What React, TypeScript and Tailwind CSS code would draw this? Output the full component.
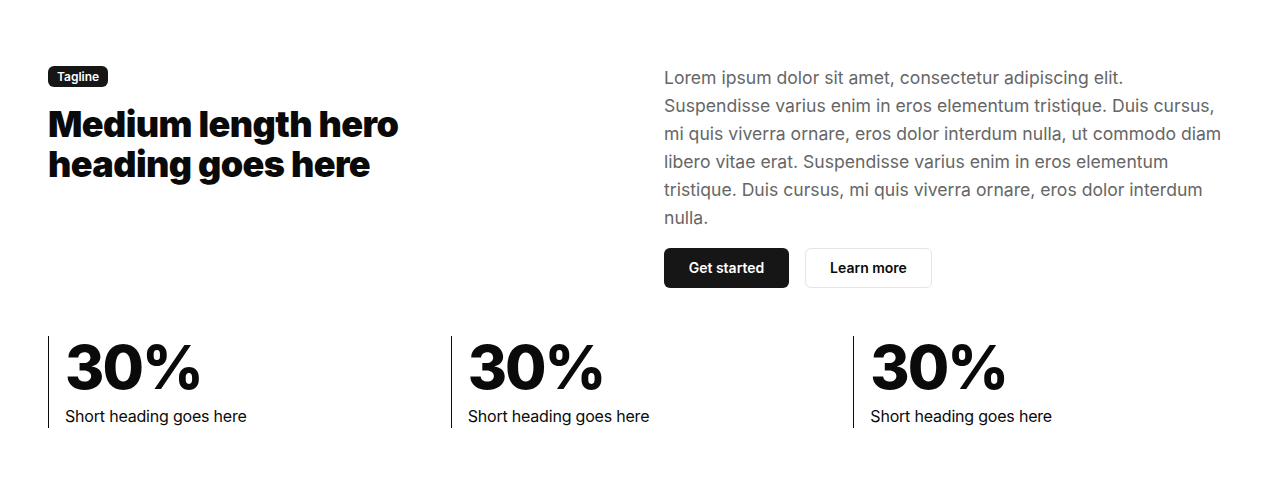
export default function App() {
  const stats = [
    { value: "30%", label: "Short heading goes here" },
    { value: "30%", label: "Short heading goes here" },
    { value: "30%", label: "Short heading goes here" },
  ];

  return (
    <section
      className="bg-white px-12 py-16 text-[#0a0a0a]"
      style={{ fontFamily: "Inter, 'Noto Sans', sans-serif" }}
    >
      <div className="grid grid-cols-2 gap-12">
        <div className="pt-[2px]">
          <div className="flex h-[21px] w-fit items-center rounded-md bg-[#161616] px-[9px] text-xs font-semibold text-white">
            Tagline
          </div>
          <h1 className="mt-[17px] text-[36px] font-black leading-[40px] tracking-[-0.6px]">
            Medium length hero
            <br />
            heading goes here
          </h1>
        </div>
        <div>
          <p className="text-[17.6px] leading-7 text-[#666666]">
            Lorem ipsum dolor sit amet, consectetur adipiscing elit. Suspendisse varius enim in eros
            elementum tristique. Duis cursus, mi quis viverra ornare, eros dolor interdum nulla, ut
            commodo diam libero vitae erat. Suspendisse varius enim in eros elementum tristique. Duis
            cursus, mi quis viverra ornare, eros dolor interdum nulla.
          </p>
          <div className="mt-4 flex gap-4">
            <button className="h-10 w-[125px] rounded-md bg-[#161616] text-sm font-semibold text-white">
              Get started
            </button>
            <button className="h-10 w-[127px] rounded-md border border-[#e5e5e5] bg-white text-sm font-semibold text-[#0a0a0a]">
              Learn more
            </button>
          </div>
        </div>
      </div>

      <div className="mt-12 grid grid-cols-3 gap-6">
        {stats.map((s, i) => (
          <div key={i} className="h-[92px] border-l border-[#0a0a0a] pl-4">
            <div className="text-[60px] font-extrabold leading-[62px] tracking-[-2px]">{s.value}</div>
            <div className="mt-[6px] text-base leading-6 tracking-[-0.2px]">{s.label}</div>
          </div>
        ))}
      </div>
    </section>
  );
}
